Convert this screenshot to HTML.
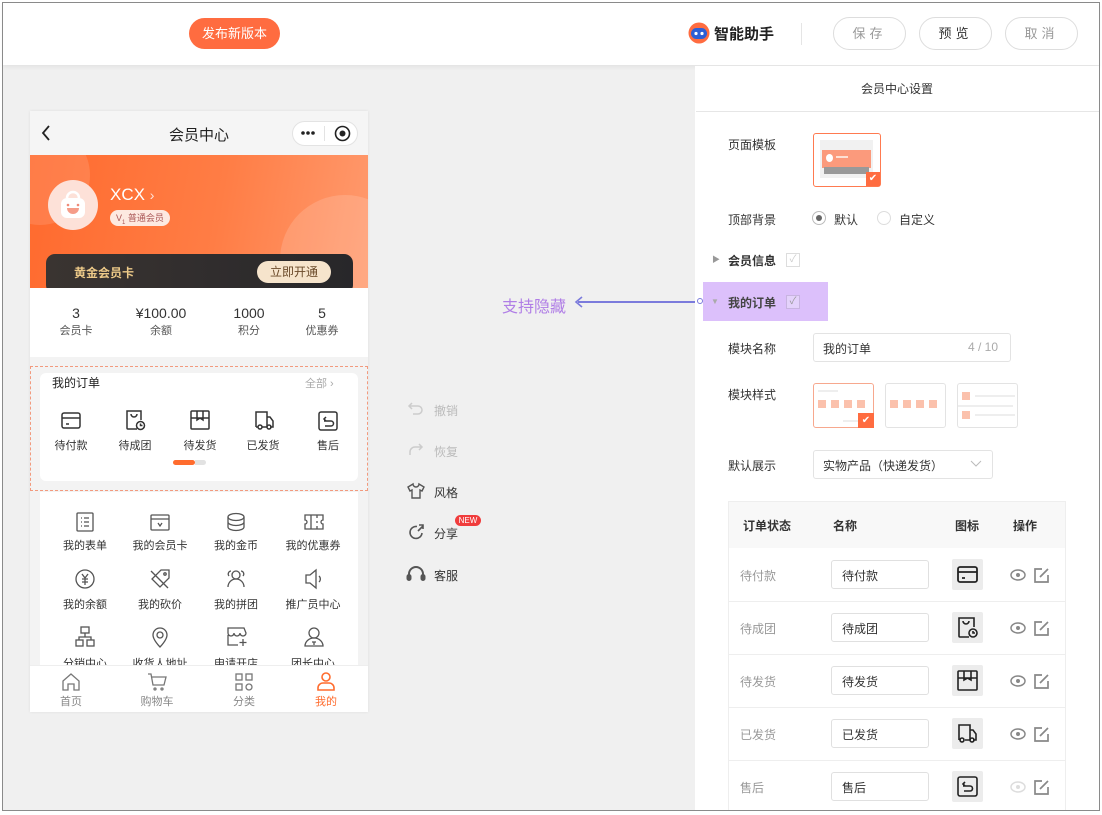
<!DOCTYPE html>
<html><head><meta charset="utf-8"><style>
*{box-sizing:border-box;margin:0;padding:0}
body{width:1102px;height:815px;background:#fff;font-family:"Liberation Sans","Noto Sans CJK SC",sans-serif;position:relative;overflow:hidden;color:#333}
.a{position:absolute}
.c{text-align:center}
.fs12{font-size:12px}.fs13{font-size:13px}
</style></head><body>
<div class="a" style="left:2px;top:2px;width:1098px;height:809px;border:1px solid #8a8a8a;background:#f0f0f0;overflow:hidden">
</div>
<div class="a" style="left:3px;top:3px;width:1096px;height:62px;background:#fff;box-shadow:0 2px 4px rgba(0,0,0,.06)"></div>
<div class="a c" style="left:189px;top:18px;width:91px;height:31px;border-radius:16px;background:#ff6c40;color:#fff;font-size:13px;line-height:31px">发布新版本</div>
<svg class="a" style="left:687px;top:22px" width="24" height="22" viewBox="0 0 24 22"><circle cx="12" cy="11" r="10.5" fill="#ff6c40"/><rect x="4" y="6" width="16" height="11" rx="5.5" fill="#2c5fd6"/><circle cx="9" cy="11.5" r="1.6" fill="#fff"/><circle cx="15" cy="11.5" r="1.6" fill="#fff"/></svg>
<div class="a" style="left:714px;top:23px;font-size:15px;font-weight:bold;color:#222">智能助手</div>
<div class="a" style="left:801px;top:23px;width:1px;height:22px;background:#e5e5e5"></div>
<div class="a c" style="left:833px;top:17px;width:73px;height:33px;border:1px solid #ddd;border-radius:17px;line-height:31px;font-size:13px;color:#999;letter-spacing:4px">保存</div>
<div class="a c" style="left:919px;top:17px;width:73px;height:33px;border:1px solid #ddd;border-radius:17px;line-height:31px;font-size:13px;color:#333;letter-spacing:4px">预览</div>
<div class="a c" style="left:1005px;top:17px;width:73px;height:33px;border:1px solid #ddd;border-radius:17px;line-height:31px;font-size:13px;color:#999;letter-spacing:4px">取消</div>

<div class="a" style="left:30px;top:111px;width:338px;height:601px;background:#f3f3f3;overflow:hidden;box-shadow:0 0 3px rgba(0,0,0,.08)">
  <div class="a" style="left:0;top:0;width:338px;height:44px;background:#f5f5f5"></div>
  <svg class="a" style="left:10px;top:14px" width="12" height="16"><path d="M9 1L3 8l6 7" stroke="#222" stroke-width="1.8" fill="none"/></svg>
  <div class="a c" style="left:100px;top:13px;width:138px;font-size:15px;color:#222">会员中心</div>
  <div class="a" style="left:262px;top:10px;width:66px;height:25px;border:1px solid #e3e3e3;border-radius:13px;background:#fff"></div>
  <svg class="a" style="left:270px;top:19px" width="16" height="6"><circle cx="3" cy="3" r="1.8" fill="#222"/><circle cx="8" cy="3" r="1.8" fill="#222"/><circle cx="13" cy="3" r="1.8" fill="#222"/></svg>
  <div class="a" style="left:294px;top:15px;width:1px;height:15px;background:#e3e3e3"></div>
  <svg class="a" style="left:304px;top:14px" width="17" height="17"><circle cx="8.5" cy="8.5" r="7" stroke="#222" stroke-width="1.6" fill="none"/><circle cx="8.5" cy="8.5" r="3" fill="#222"/></svg>
  <div class="a" style="left:0;top:44px;width:338px;height:133px;background:linear-gradient(100deg,#ff6a2e 0%,#ff7d45 55%,#ff9a6e 100%);overflow:hidden">
    <div class="a" style="left:-40px;top:-30px;width:100px;height:100px;border-radius:50%;background:rgba(255,255,255,.12)"></div>
    <div class="a" style="left:250px;top:40px;width:130px;height:130px;border-radius:50%;background:rgba(255,255,255,.15)"></div>
    <div class="a" style="left:230px;top:100px;width:70px;height:70px;border-radius:50%;background:rgba(255,255,255,.1)"></div>
    <div class="a" style="left:18px;top:25px;width:50px;height:50px;border-radius:50%;background:#fde1d8"></div>
    <svg class="a" style="left:25px;top:32px" width="36" height="36"><path d="M12 11a6 6 0 0 1 12 0" stroke="#fff" stroke-width="2.5" fill="none"/><rect x="6" y="11" width="24" height="20" rx="6" fill="#fff"/><circle cx="13" cy="18" r="1.3" fill="#f08a78"/><circle cx="23" cy="18" r="1.3" fill="#f08a78"/><path d="M12 21h12a6 6 0 0 1-12 0z" fill="#f59c88"/></svg>
    <div class="a" style="left:80px;top:30px;color:#fff;font-size:17px">XCX <span style="font-size:14px;opacity:.8">›</span></div>
    <div class="a" style="left:80px;top:55px;height:16px;padding:0 6px;border-radius:8px;background:#fde9e1;font-size:9px;line-height:16px;color:#a55">V<sub style="font-size:6px">1</sub> 普通会员</div>
    <div class="a" style="left:16px;top:99px;width:307px;height:40px;border-radius:9px;background:linear-gradient(90deg,#3a3431,#28272a)"></div>
    <div class="a" style="left:44px;top:109px;font-size:12px;font-weight:bold;color:#ecc988">黄金会员卡</div>
    <div class="a c" style="left:227px;top:106px;width:74px;height:22px;border-radius:11px;background:#f6e4cc;font-size:12px;line-height:22px;color:#6b4a2a">立即开通</div>
  </div>
  <div class="a" style="left:0;top:177px;width:338px;height:69px;background:#fff"></div>
  <div class="a c" style="left:16px;top:194px;width:60px;font-size:14px">3<br><span style="font-size:11px;color:#555">会员卡</span></div>
  <div class="a c" style="left:91px;top:194px;width:80px;font-size:14px">¥100.00<br><span style="font-size:11px;color:#555">余额</span></div>
  <div class="a c" style="left:189px;top:194px;width:60px;font-size:14px">1000<br><span style="font-size:11px;color:#555">积分</span></div>
  <div class="a c" style="left:262px;top:194px;width:60px;font-size:14px">5<br><span style="font-size:11px;color:#555">优惠券</span></div>
  <div class="a" style="left:10px;top:262px;width:318px;height:108px;background:#fff;border-radius:6px"></div>
  <div class="a" style="left:0;top:255px;width:338px;height:125px;border:1px dashed #f29a7e"></div>
  <div class="a" style="left:22px;top:263px;font-size:12px;color:#222">我的订单</div>
  <div class="a" style="left:275px;top:264px;font-size:11px;color:#aaa">全部 ›</div>
  <div class="a" style="left:143px;top:349px;width:22px;height:5px;border-radius:3px;background:#ff6c2e"></div>
  <div class="a" style="left:165px;top:349px;width:11px;height:5px;border-radius:0 3px 3px 0;background:#e2e2e2"></div>
  <div class="a" style="left:10px;top:381px;width:318px;height:180px;background:#fff"></div>
  <div class="a" style="left:0;top:554px;width:338px;height:47px;background:#fff;border-top:1px solid #eee"></div>
</div>

<svg class="a" style="left:59px;top:409px" width="24" height="24" fill="none" stroke="#333" stroke-width="1.5"><rect x="3" y="4" width="18" height="15" rx="2"/><path d="M3 9h18M7 15h3"/></svg>
<svg class="a" style="left:123px;top:408px" width="24" height="24" fill="none" stroke="#333" stroke-width="1.5"><path d="M14 21H5a1 1 0 0 1-1-1V3h14v9"/><path d="M8 6a3 3 0 0 0 6 0"/><circle cx="17.5" cy="17.5" r="4"/><path d="M17.5 15.5v2h2"/></svg>
<svg class="a" style="left:188px;top:408px" width="24" height="24" fill="none" stroke="#333" stroke-width="1.5"><rect x="3" y="3" width="18" height="18" rx="1"/><path d="M3 10h18M9 3v9l3-2 3 2V3"/></svg>
<svg class="a" style="left:252px;top:408px" width="24" height="24" fill="none" stroke="#333" stroke-width="1.5"><path d="M4 19V4h11v15M15 9h3l3 4v6h-3M4 19h2M10 19h5"/><circle cx="8" cy="19" r="2"/><circle cx="17" cy="19" r="2"/></svg>
<svg class="a" style="left:316px;top:409px" width="24" height="24" fill="none" stroke="#333" stroke-width="1.5"><rect x="3" y="3" width="18" height="18" rx="2"/><path d="M8 12h7a2.5 2.5 0 0 1 0 5H9M10 8l-2 2 2 2"/></svg>
<div class="a c" style="left:46px;top:437px;width:50px;font-size:11px">待付款</div>
<div class="a c" style="left:110px;top:437px;width:50px;font-size:11px">待成团</div>
<div class="a c" style="left:175px;top:437px;width:50px;font-size:11px">待发货</div>
<div class="a c" style="left:238px;top:437px;width:50px;font-size:11px">已发货</div>
<div class="a c" style="left:303px;top:437px;width:50px;font-size:11px">售后</div>

<div class="a" style="left:30px;top:505px;width:338px;height:160px;overflow:hidden">
<svg class="a" style="left:43px;top:5px" width="24" height="24" fill="none" stroke="#555" stroke-width="1.3"><rect x="4" y="3" width="16" height="18" rx="1"/><path d="M8 8h1M11 8h5M8 12h1M11 12h5M8 16h1M11 16h5"/></svg>
<svg class="a" style="left:118px;top:5px" width="24" height="24" fill="none" stroke="#555" stroke-width="1.3"><rect x="3" y="5" width="18" height="15" rx="1"/><path d="M3 9h18M10 13l2 3 2-3"/></svg>
<svg class="a" style="left:194px;top:5px" width="24" height="24" fill="none" stroke="#555" stroke-width="1.3"><ellipse cx="12" cy="7" rx="8" ry="3.5"/><path d="M4 7v10c0 2 4 3.5 8 3.5s8-1.5 8-3.5V7M4 12c0 2 4 3.5 8 3.5s8-1.5 8-3.5"/></svg>
<svg class="a" style="left:272px;top:5px" width="24" height="24" fill="none" stroke="#555" stroke-width="1.3"><path d="M3 5h18v5a2 2 0 0 0 0 4v5H3v-5a2 2 0 0 0 0-4zM9 5v14M15 5v3M15 11v2M15 16v3"/></svg>
<div class="a c" style="left:20px;top:32px;width:70px;font-size:11px">我的表单</div>
<div class="a c" style="left:95px;top:32px;width:70px;font-size:11px">我的会员卡</div>
<div class="a c" style="left:171px;top:32px;width:70px;font-size:11px">我的金币</div>
<div class="a c" style="left:248px;top:32px;width:70px;font-size:11px">我的优惠券</div>
<svg class="a" style="left:43px;top:62px" width="24" height="24" fill="none" stroke="#555" stroke-width="1.3"><circle cx="12" cy="12" r="9"/><path d="M9 7l3 4 3-4M12 11v7M9 12h6M9 15h6"/></svg>
<svg class="a" style="left:118px;top:62px" width="24" height="24" fill="none" stroke="#555" stroke-width="1.3"><path d="M13 3h8v8l-9 9-8-8z"/><circle cx="17" cy="7" r="1.2"/><path d="M3 4l17 17"/></svg>
<svg class="a" style="left:194px;top:62px" width="24" height="24" fill="none" stroke="#555" stroke-width="1.3"><circle cx="12" cy="8" r="4"/><path d="M4 20a8 8 0 0 1 16 0M7 4a3 3 0 0 0-2 5M17 4a3 3 0 0 1 2 5"/></svg>
<svg class="a" style="left:272px;top:62px" width="24" height="24" fill="none" stroke="#555" stroke-width="1.3"><path d="M4 8h4l6-5v18l-6-5H4zM17 9a4 4 0 0 1 0 6"/></svg>
<div class="a c" style="left:20px;top:91px;width:70px;font-size:11px">我的余额</div>
<div class="a c" style="left:95px;top:91px;width:70px;font-size:11px">我的砍价</div>
<div class="a c" style="left:171px;top:91px;width:70px;font-size:11px">我的拼团</div>
<div class="a c" style="left:248px;top:91px;width:70px;font-size:11px">推广员中心</div>
<svg class="a" style="left:43px;top:120px" width="24" height="24" fill="none" stroke="#555" stroke-width="1.3"><rect x="8" y="2" width="8" height="6"/><rect x="3" y="15" width="7" height="6"/><rect x="14" y="15" width="7" height="6"/><path d="M12 8v4M6 15v-3h12v3"/></svg>
<svg class="a" style="left:118px;top:120px" width="24" height="24" fill="none" stroke="#555" stroke-width="1.3"><path d="M12 22s-7-7-7-12a7 7 0 0 1 14 0c0 5-7 12-7 12z"/><circle cx="12" cy="10" r="3"/></svg>
<svg class="a" style="left:194px;top:120px" width="24" height="24" fill="none" stroke="#555" stroke-width="1.3"><path d="M4 3h16l2 5a3 3 0 0 1-6 0 3 3 0 0 1-6 0 3 3 0 0 1-6 0zM4 10v10h10M19 14v7M15.5 17.5h7"/></svg>
<svg class="a" style="left:272px;top:120px" width="24" height="24" fill="none" stroke="#555" stroke-width="1.3"><circle cx="12" cy="8" r="5"/><path d="M3 21a9 8 0 0 1 18 0zM10 17h4M12 17v3"/></svg>
<div class="a c" style="left:20px;top:150px;width:70px;font-size:11px">分销中心</div>
<div class="a c" style="left:95px;top:150px;width:70px;font-size:11px">收货人地址</div>
<div class="a c" style="left:171px;top:150px;width:70px;font-size:11px">申请开店</div>
<div class="a c" style="left:248px;top:150px;width:70px;font-size:11px">团长中心</div>
</div>
<svg class="a" style="left:61px;top:672px" width="20" height="20" fill="none" stroke="#777" stroke-width="1.3"><path d="M2 9l8-7 8 7v9H13v-6H7v6H2z"/></svg>
<svg class="a" style="left:147px;top:672px" width="20" height="20" fill="none" stroke="#777" stroke-width="1.3"><path d="M1 2h3l2 11h11l2-8H5"/><circle cx="8" cy="17" r="1"/><circle cx="15" cy="17" r="1"/></svg>
<svg class="a" style="left:234px;top:672px" width="20" height="20" fill="none" stroke="#777" stroke-width="1.3"><rect x="2" y="2" width="6" height="6"/><rect x="12" y="2" width="6" height="6"/><rect x="2" y="12" width="6" height="6"/><circle cx="15" cy="15" r="3"/></svg>
<svg class="a" style="left:316px;top:671px" width="20" height="20" fill="none" stroke="#ff6c2e" stroke-width="1.6"><circle cx="10" cy="6" r="4"/><path d="M2 19v-2a5 5 0 0 1 5-5h6a5 5 0 0 1 5 5v2z"/></svg>
<div class="a c" style="left:46px;top:693px;width:50px;font-size:11px;color:#888">首页</div>
<div class="a c" style="left:132px;top:693px;width:50px;font-size:11px;color:#888">购物车</div>
<div class="a c" style="left:219px;top:693px;width:50px;font-size:11px;color:#888">分类</div>
<div class="a c" style="left:301px;top:693px;width:50px;font-size:11px;color:#ff6c2e">我的</div>

<svg class="a" style="left:407px;top:401px" width="18" height="16" fill="none" stroke="#ccc" stroke-width="1.5"><path d="M5 2L2 5l3 3M2 5h9a4 4 0 0 1 0 8H6"/></svg>
<div class="a" style="left:434px;top:402px;font-size:12px;color:#bbb">撤销</div>
<svg class="a" style="left:407px;top:442px" width="18" height="16" fill="none" stroke="#ccc" stroke-width="1.5"><path d="M12 2l3 3-3 3M15 5H8a5 5 0 0 0-5 5v3"/></svg>
<div class="a" style="left:434px;top:443px;font-size:12px;color:#bbb">恢复</div>
<svg class="a" style="left:407px;top:482px" width="18" height="18" fill="none" stroke="#555" stroke-width="1.4"><path d="M6 2L1 5l2 4 2-1v8h8V8l2 1 2-4-5-3a3 3 0 0 1-6 0z"/></svg>
<div class="a" style="left:434px;top:484px;font-size:12px;color:#333">风格</div>
<svg class="a" style="left:407px;top:523px" width="18" height="18" fill="none" stroke="#555" stroke-width="1.6"><path d="M15 10a6 6 0 1 1-5-6.5M11 8l5-5M12 2h4v4"/></svg>
<div class="a" style="left:434px;top:525px;font-size:12px;color:#333">分享</div>
<div class="a c" style="left:455px;top:515px;width:26px;height:11px;border-radius:6px;background:#f03c3c;color:#fff;font-size:8px;line-height:11px">NEW</div>
<svg class="a" style="left:406px;top:565px" width="20" height="18" fill="none" stroke="#555" stroke-width="2"><path d="M3 12V9a7 7 0 0 1 14 0v3"/><rect x="1.5" y="10" width="3" height="5" rx="1.5" fill="#555"/><rect x="15.5" y="10" width="3" height="5" rx="1.5" fill="#555"/></svg>
<div class="a" style="left:434px;top:567px;font-size:12px;color:#333">客服</div>

<div class="a" style="left:502px;top:293px;font-size:16px;color:#b07ee6">支持隐藏</div>
<div class="a" style="left:578px;top:301px;width:122px;height:1.5px;background:#7b7bdc"></div>
<svg class="a" style="left:574px;top:296px" width="10" height="12"><path d="M8 1L2 6l6 5" stroke="#7b7bdc" stroke-width="1.6" fill="none"/></svg>
<div class="a" style="left:697px;top:298px;width:6px;height:6px;border-radius:50%;border:1.3px solid #7b7bdc;background:#fff;z-index:3"></div>

<div class="a" style="left:695px;top:66px;width:404px;height:744px;background:#fff"></div>
<div class="a c" style="left:695px;top:80px;width:404px;font-size:12px;color:#333">会员中心设置</div>
<div class="a" style="left:696px;top:111px;width:403px;height:1px;background:#e6e6e6"></div>
<div class="a fs12" style="left:728px;top:136px">页面模板</div>
<div class="a" style="left:813px;top:133px;width:68px;height:54px;border:1.5px solid #ff7a50;border-radius:3px;background:#fff"></div>
<div class="a" style="left:820px;top:140px;width:53px;height:38px;background:#f1f1f1"></div>
<div class="a" style="left:822px;top:150px;width:49px;height:18px;background:#fb9a7c"></div>
<div class="a" style="left:826px;top:154px;width:7px;height:8px;border-radius:50%;background:#fff"></div>
<div class="a" style="left:836px;top:156px;width:12px;height:2px;background:#fde0d4"></div>
<div class="a" style="left:824px;top:167px;width:45px;height:7px;background:#999"></div>
<div class="a" style="left:866px;top:172px;width:14px;height:14px;background:#ff6c40;color:#fff;font-size:10px;line-height:14px;text-align:center">✔</div>
<div class="a fs12" style="left:728px;top:211px">顶部背景</div>
<div class="a" style="left:812px;top:211px;width:14px;height:14px;border-radius:50%;border:1px solid #bbb"></div>
<div class="a" style="left:816px;top:215px;width:6px;height:6px;border-radius:50%;background:#666"></div>
<div class="a fs12" style="left:834px;top:211px">默认</div>
<div class="a" style="left:877px;top:211px;width:14px;height:14px;border-radius:50%;border:1px solid #ddd"></div>
<div class="a fs12" style="left:899px;top:211px">自定义</div>
<div class="a" style="left:712px;top:254px;font-size:8px;color:#999">▶</div>
<div class="a fs12" style="left:728px;top:252px;font-weight:bold">会员信息</div>
<div class="a" style="left:786px;top:253px;width:14px;height:14px;border:1px solid #ddd;color:#ccc;font-size:10px;line-height:12px;text-align:center">✓</div>
<div class="a" style="left:703px;top:282px;width:125px;height:39px;background:#dcc0fb"></div>
<div class="a" style="left:711px;top:297px;font-size:8px;color:#aaa">▼</div>
<div class="a fs12" style="left:728px;top:294px;font-weight:bold;color:#444">我的订单</div>
<div class="a" style="left:786px;top:295px;width:14px;height:14px;border:1px solid #c8b4e0;background:#e4d2fb;color:#999;font-size:10px;line-height:12px;text-align:center">✓</div>
<div class="a fs12" style="left:728px;top:340px">模块名称</div>
<div class="a" style="left:813px;top:333px;width:198px;height:29px;border:1px solid #e3e3e3;border-radius:3px"></div>
<div class="a fs12" style="left:823px;top:340px">我的订单</div>
<div class="a fs12" style="left:968px;top:340px;color:#aaa">4 / 10</div>
<div class="a fs12" style="left:728px;top:386px">模块样式</div>
<div class="a" style="left:813px;top:383px;width:61px;height:45px;border:1px solid #f7a88e;border-radius:3px"></div>
<div class="a" style="left:885px;top:383px;width:61px;height:45px;border:1px solid #e3e3e3;border-radius:3px"></div>
<div class="a" style="left:957px;top:383px;width:61px;height:45px;border:1px solid #e3e3e3;border-radius:3px"></div>
<svg class="a" style="left:813px;top:383px" width="210" height="46"><g fill="#fbc1ac"><rect x="5" y="17" width="8" height="8"/><rect x="18" y="17" width="8" height="8"/><rect x="31" y="17" width="8" height="8"/><rect x="44" y="17" width="8" height="8"/><rect x="77" y="17" width="8" height="8"/><rect x="90" y="17" width="8" height="8"/><rect x="103" y="17" width="8" height="8"/><rect x="116" y="17" width="8" height="8"/><rect x="149" y="9" width="8" height="8"/><rect x="149" y="28" width="8" height="8"/></g><g stroke="#ddd"><path d="M5 8h20M30 38h20M162 13h40M162 32h40M145 23h55"/></g></svg>
<div class="a" style="left:858px;top:413px;width:16px;height:15px;background:#ff6c40;color:#fff;font-size:10px;line-height:15px;text-align:center">✔</div>
<div class="a fs12" style="left:728px;top:457px">默认展示</div>
<div class="a" style="left:813px;top:450px;width:180px;height:29px;border:1px solid #e3e3e3;border-radius:3px"></div>
<div class="a fs12" style="left:823px;top:457px">实物产品（快递发货）</div>
<svg class="a" style="left:970px;top:460px" width="12" height="8"><path d="M1 1l5 5 5-5" stroke="#bbb" fill="none"/></svg>
<div class="a" style="left:728px;top:501px;width:338px;height:310px;border:1px solid #eee;border-bottom:none"></div>
<div class="a" style="left:729px;top:502px;width:336px;height:46px;background:#f8f8f8"></div>
<div class="a fs12" style="left:743px;top:517px;font-weight:bold">订单状态</div>
<div class="a fs12" style="left:833px;top:517px;font-weight:bold">名称</div>
<div class="a fs12" style="left:955px;top:517px;font-weight:bold">图标</div>
<div class="a fs12" style="left:1013px;top:517px;font-weight:bold">操作</div>

<div class="a" style="left:729px;top:601px;width:336px;height:1px;background:#eee"></div>
<div class="a" style="left:729px;top:654px;width:336px;height:1px;background:#eee"></div>
<div class="a" style="left:729px;top:707px;width:336px;height:1px;background:#eee"></div>
<div class="a" style="left:729px;top:760px;width:336px;height:1px;background:#eee"></div>

<div class="a fs12" style="left:740px;top:567px;color:#999">待付款</div>
<div class="a fs12" style="left:740px;top:620px;color:#999">待成团</div>
<div class="a fs12" style="left:740px;top:673px;color:#999">待发货</div>
<div class="a fs12" style="left:740px;top:726px;color:#999">已发货</div>
<div class="a fs12" style="left:740px;top:779px;color:#999">售后</div>
<div class="a" style="left:831px;top:560px;width:98px;height:29px;border:1px solid #e0e0e0;border-radius:3px;padding:6px 10px;font-size:12px">待付款</div>
<div class="a" style="left:831px;top:613px;width:98px;height:29px;border:1px solid #e0e0e0;border-radius:3px;padding:6px 10px;font-size:12px">待成团</div>
<div class="a" style="left:831px;top:666px;width:98px;height:29px;border:1px solid #e0e0e0;border-radius:3px;padding:6px 10px;font-size:12px">待发货</div>
<div class="a" style="left:831px;top:719px;width:98px;height:29px;border:1px solid #e0e0e0;border-radius:3px;padding:6px 10px;font-size:12px">已发货</div>
<div class="a" style="left:831px;top:772px;width:98px;height:29px;border:1px solid #e0e0e0;border-radius:3px;padding:6px 10px;font-size:12px">售后</div>

<div class="a" style="left:952px;top:559px;width:31px;height:31px;background:#ececec;border-radius:2px"></div>
<div class="a" style="left:952px;top:612px;width:31px;height:31px;background:#ececec;border-radius:2px"></div>
<div class="a" style="left:952px;top:665px;width:31px;height:31px;background:#ececec;border-radius:2px"></div>
<div class="a" style="left:952px;top:718px;width:31px;height:31px;background:#ececec;border-radius:2px"></div>
<div class="a" style="left:952px;top:771px;width:31px;height:31px;background:#ececec;border-radius:2px"></div>
<svg class="a" style="left:955px;top:562px" width="25" height="25" fill="none" stroke="#222" stroke-width="1.8"><rect x="3" y="5" width="19" height="15" rx="2"/><path d="M3 10h19M7 16h3"/></svg>
<svg class="a" style="left:955px;top:615px" width="25" height="25" fill="none" stroke="#222" stroke-width="1.6"><path d="M14 22H5a1 1 0 0 1-1-1V3h15v9"/><path d="M8 6a3 3 0 0 0 6 0"/><circle cx="18" cy="18" r="4"/><path d="M18 16v2h2"/></svg>
<svg class="a" style="left:955px;top:668px" width="25" height="25" fill="none" stroke="#222" stroke-width="1.6"><rect x="3" y="3" width="19" height="19" rx="1"/><path d="M3 10h19M9 3v9l3.5-2 3.5 2V3"/></svg>
<svg class="a" style="left:955px;top:721px" width="25" height="25" fill="none" stroke="#222" stroke-width="1.6"><path d="M4 19V4h11v15M15 9h3l3 4v6h-3M10 19h5"/><circle cx="7" cy="19" r="2"/><circle cx="17" cy="19" r="2"/></svg>
<svg class="a" style="left:955px;top:774px" width="25" height="25" fill="none" stroke="#222" stroke-width="1.6"><rect x="3" y="3" width="19" height="19" rx="2"/><path d="M8 12h7a2.5 2.5 0 0 1 0 5H9M10 8l-2 2 2 2"/></svg>

<svg class="a" style="left:1010px;top:566px" width="42" height="18"><ellipse cx="8" cy="9" rx="7" ry="5" stroke="#888" stroke-width="1.5" fill="none"/><circle cx="8" cy="9" r="2" fill="#888"/><path d="M32 3h-7v13h13V9M30 11l8-8" stroke="#888" stroke-width="1.7" fill="none"/></svg>
<svg class="a" style="left:1010px;top:619px" width="42" height="18"><ellipse cx="8" cy="9" rx="7" ry="5" stroke="#888" stroke-width="1.5" fill="none"/><circle cx="8" cy="9" r="2" fill="#888"/><path d="M32 3h-7v13h13V9M30 11l8-8" stroke="#888" stroke-width="1.7" fill="none"/></svg>
<svg class="a" style="left:1010px;top:672px" width="42" height="18"><ellipse cx="8" cy="9" rx="7" ry="5" stroke="#888" stroke-width="1.5" fill="none"/><circle cx="8" cy="9" r="2" fill="#888"/><path d="M32 3h-7v13h13V9M30 11l8-8" stroke="#888" stroke-width="1.7" fill="none"/></svg>
<svg class="a" style="left:1010px;top:725px" width="42" height="18"><ellipse cx="8" cy="9" rx="7" ry="5" stroke="#888" stroke-width="1.5" fill="none"/><circle cx="8" cy="9" r="2" fill="#888"/><path d="M32 3h-7v13h13V9M30 11l8-8" stroke="#888" stroke-width="1.7" fill="none"/></svg>
<svg class="a" style="left:1010px;top:778px" width="42" height="18"><ellipse cx="8" cy="9" rx="7" ry="5" stroke="#ddd" stroke-width="1.5" fill="none"/><circle cx="8" cy="9" r="2" fill="#ddd"/><path d="M32 3h-7v13h13V9M30 11l8-8" stroke="#888" stroke-width="1.7" fill="none"/></svg>

<div class="a" style="left:2px;top:2px;width:1098px;height:809px;border:1px solid #8a8a8a;pointer-events:none"></div>
</body></html>
